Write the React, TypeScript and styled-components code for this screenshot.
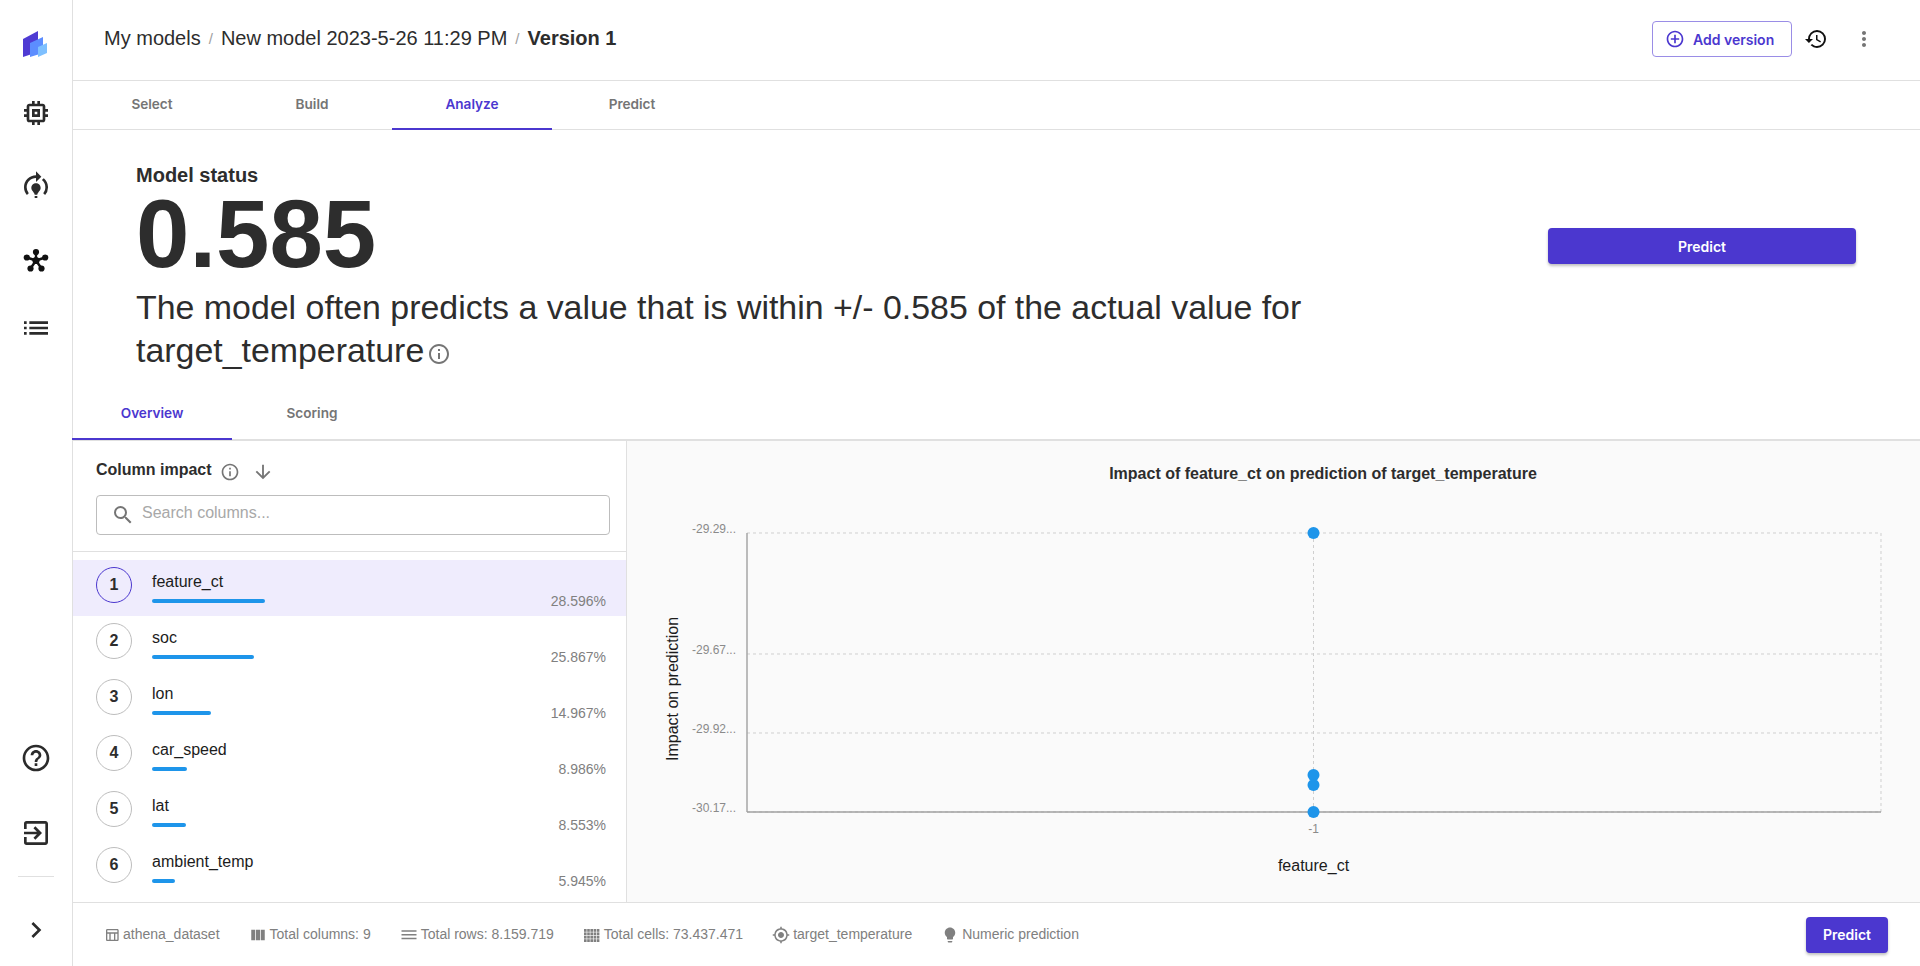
import React from 'react';
import styled, { createGlobalStyle } from 'styled-components';
import {
  MdAddCircleOutline,
  MdArrowDownward,
  MdChevronRight,
  MdDehaze,
  MdExitToApp,
  MdGpsFixed,
  MdHelpOutline,
  MdHistory,
  MdInfoOutline,
  MdLightbulb,
  MdList,
  MdModelTraining,
  MdMoreVert,
  MdOutlineMemory,
  MdOutlineTableChart,
  MdSearch,
  MdViewColumn
} from 'react-icons/md';

const accent = '#4b37cf';
const line = '#e0e0e0';
const grey = '#757575';

const GlobalStyle = createGlobalStyle`
  html, body { margin: 0; padding: 0; height: 100%; overflow: hidden; background: #fff; }
  #root { height: 100%; }
  * { box-sizing: border-box; }
`;

const Page = styled.div`
  display: flex;
  height: 966px;
  font-family: 'Liberation Sans', Arial, sans-serif;
  color: #2d2d2d;
`;

const Sidebar = styled.aside`
  width: 73px;
  flex: none;
  display: flex;
  flex-direction: column;
  align-items: center;
  border-right: 1px solid ${line};
  padding-top: 28px;
`;

const Logo = styled.svg`
  width: 32px;
  height: 32px;
  margin-right: 1px;
`;

const NavItem = styled.div<{ $mt: number }>`
  display: flex;
  width: 32px;
  height: 32px;
  margin-top: ${p => p.$mt}px;
  margin-right: 1px;
  color: #2b2b2b;
`;

const Spacer = styled.div`
  flex: 1;
`;

const SideDivider = styled.hr`
  width: 36px;
  margin: 27px 1px 0 0;
  border: 0;
  border-top: 1px solid ${line};
`;

const SideFoot = styled.div`
  height: 20px;
  flex: none;
`;

const Main = styled.main`
  flex: 1;
  min-width: 0;
  display: flex;
  flex-direction: column;
`;

const Header = styled.header`
  height: 81px;
  flex: none;
  display: flex;
  align-items: center;
  padding: 0 44px 2px 31px;
  border-bottom: 1px solid ${line};
`;

const Crumbs = styled.nav`
  display: flex;
  align-items: center;
  flex: 1;
  font-size: 20px;
  margin-top: -1px;
`;

const Crumb = styled.span<{ $current?: boolean }>`
  font-weight: ${p => (p.$current ? 700 : 400)};
`;

const CrumbSep = styled.span`
  color: #a0a0a0;
  margin: 0 8px;
  font-size: 15px;
`;

const AddVersion = styled.button`
  width: 140px;
  height: 36px;
  display: flex;
  align-items: center;
  gap: 8px;
  padding: 0 12px;
  background: #fff;
  border: 1px solid #9a8de6;
  border-radius: 4px;
  color: ${accent};
  font-family: Inter, sans-serif;
  font-size: 14px;
  font-weight: 600;
  white-space: nowrap;
`;

const HeaderIcon = styled.span<{ $ml: number; $color: string }>`
  display: flex;
  margin-left: ${p => p.$ml}px;
  color: ${p => p.$color};
`;

const TabBar = styled.div`
  display: flex;
  flex: none;
  height: 49px;
  border-bottom: 1px solid ${line};
`;

const SubTabBar = styled(TabBar)`
  height: 48px;
  border-bottom-width: 2px;
`;

const Tab = styled.div<{ $active?: boolean; $lift?: number }>`
  width: 160px;
  display: flex;
  align-items: center;
  justify-content: center;
  padding-bottom: ${p => p.$lift ?? 1}px;
  margin-left: -1px;
  margin-right: 1px;
  font-family: Inter, sans-serif;
  font-size: 13.6px;
  font-weight: 600;
  color: ${p => (p.$active ? accent : grey)};
  border-bottom: 2px solid ${p => (p.$active ? accent : 'transparent')};
  margin-bottom: -1px;
`;

const Status = styled.section`
  flex: none;
  height: 263px;
  display: flex;
  justify-content: space-between;
  padding: 33px 64px 0 63px;
`;

const StatusText = styled.div`
  width: 1210px;
`;

const StatusLabel = styled.div`
  font-size: 20px;
  font-weight: 700;
  line-height: 24px;
`;

const Score = styled.div`
  font-size: 96px;
  font-weight: 700;
  line-height: 92px;
  margin-top: 1px;
`;

const Sentence = styled.div`
  font-size: 33.9px;
  line-height: 43px;
  margin-top: 6px;
`;

const InlineInfo = styled(MdInfoOutline)`
  vertical-align: -4px;
  margin-left: 3px;
  color: ${grey};
`;

const PredictLarge = styled.button`
  width: 308px;
  height: 36px;
  margin-top: 65px;
  border: 0;
  border-radius: 4px;
  background: ${accent};
  color: #fff;
  font-family: Inter, sans-serif;
  font-size: 14px;
  font-weight: 600;
  box-shadow: 0 2px 3px rgba(0, 0, 0, 0.25);
`;

const Body = styled.div`
  flex: 1;
  min-height: 0;
  display: flex;
`;

const ColumnsPanel = styled.section`
  width: 554px;
  flex: none;
  display: flex;
  flex-direction: column;
  border-right: 1px solid ${line};
  overflow: hidden;
`;

const PanelTop = styled.div`
  flex: none;
  height: 111px;
  padding: 17px 16px 0 23px;
  border-bottom: 1px solid ${line};
`;

const PanelTitle = styled.div`
  display: flex;
  align-items: center;
  height: 24px;
  font-size: 16px;
  font-weight: 700;
`;

const TitleIcon = styled.span<{ $ml: number }>`
  display: flex;
  margin: 3px 0 0 ${p => p.$ml}px;
  color: ${grey};
`;

const SearchBox = styled.div`
  display: flex;
  align-items: center;
  height: 40px;
  margin-top: 13px;
  padding-left: 14px;
  gap: 5px;
  border: 1px solid #bdbdbd;
  border-radius: 4px;
  color: ${grey};
`;

const SearchInput = styled.input`
  flex: 1;
  border: 0;
  outline: 0;
  background: none;
  font-family: 'Liberation Sans', Arial, sans-serif;
  font-size: 16px;
  margin-top: -4px;

  &::placeholder {
    color: #a8a8a8;
    opacity: 1;
  }
`;

const List = styled.div`
  padding-top: 8px;
`;

const Row = styled.div<{ $selected?: boolean }>`
  height: 56px;
  display: flex;
  align-items: center;
  padding: 0 20px 0 23px;
  background: ${p => (p.$selected ? '#efecfd' : 'transparent')};
`;

const Rank = styled.div<{ $selected?: boolean }>`
  width: 36px;
  height: 36px;
  flex: none;
  display: flex;
  align-items: center;
  justify-content: center;
  border-radius: 50%;
  border: 1px solid ${p => (p.$selected ? accent : '#bdbdbd')};
  font-size: 16px;
  font-weight: 700;
  margin-bottom: 7px;
`;

const RowInfo = styled.div`
  flex: 1;
  margin-left: 20px;
  margin-top: -1px;
`;

const RowName = styled.div`
  font-size: 16px;
  line-height: 20px;
  color: #1c1c1c;
`;

const Bar = styled.div`
  height: 4px;
  margin-top: 7px;
  border-radius: 2px;
  background: #1e95ea;
`;

const Percent = styled.div`
  align-self: flex-end;
  margin-bottom: 7px;
  font-size: 14px;
  line-height: 16px;
  color: #808080;
`;

const ChartPanel = styled.section`
  flex: 1;
  min-width: 0;
  display: flex;
  flex-direction: column;
  background: #fafafa;
`;

const ChartTitle = styled.h3`
  margin: 0;
  padding: 24px 0 0 99px;
  height: 60px;
  font-size: 16px;
  line-height: 18px;
  font-weight: 700;
  text-align: center;
  color: #2d2d2d;
`;

const ChartSvg = styled.svg`
  display: block;
  flex: 1;
  min-height: 0;
  width: 100%;
`;

const AxisLabel = styled.text`
  font-family: 'Liberation Sans', Arial, sans-serif;
  font-size: 12px;
  fill: #8a8a8a;
`;

const AxisTitle = styled.text`
  font-family: 'Liberation Sans', Arial, sans-serif;
  font-size: 16px;
  fill: #1c1c1c;
  text-anchor: middle;
`;

const Footer = styled.footer`
  flex: none;
  height: 64px;
  display: flex;
  align-items: center;
  padding: 0 32px 0 31px;
  border-top: 1px solid ${line};
`;

const FooterItems = styled.div`
  flex: 1;
  display: flex;
  align-items: center;
  gap: 29px;
`;

const FooterItem = styled.div`
  display: flex;
  align-items: center;
  gap: 3px;
  font-size: 14px;
  color: #808080;
  margin-top: -2px;

  svg {
    flex: none;
    margin-top: 3px;
  }
`;

const PredictSmall = styled.button`
  width: 82px;
  height: 36px;
  border: 0;
  border-radius: 4px;
  background: ${accent};
  color: #fff;
  font-family: Inter, sans-serif;
  font-size: 14px;
  font-weight: 600;
  box-shadow: 0 2px 3px rgba(0, 0, 0, 0.25);
`;

const columns = [
  { name: 'feature_ct', share: 28.596 },
  { name: 'soc', share: 25.867 },
  { name: 'lon', share: 14.967 },
  { name: 'car_speed', share: 8.986 },
  { name: 'lat', share: 8.553 },
  { name: 'ambient_temp', share: 5.945 }
];

// chart coords are relative to the svg, which starts at x=627 y=501
const plot = { left: 120, right: 1254, top: 32, bottom: 311, midX: 686.5 };
const ticks = [
  { label: '-29.29...', y: 32 },
  { label: '-29.67...', y: 153 },
  { label: '-29.92...', y: 232 },
  { label: '-30.17...', y: 311 }
];
const points = [32, 274, 284, 311];

const ImpactChart = () => (
  <ChartSvg viewBox="0 0 1293 401" preserveAspectRatio="xMinYMin meet">
    {ticks.map(t => (
      <g key={t.label}>
        <line x1={plot.left} x2={plot.right} y1={t.y} y2={t.y} stroke="#cfcfcf" strokeDasharray="3 3" />
        <AxisLabel x={109} y={t.y} textAnchor="end">{t.label}</AxisLabel>
      </g>
    ))}
    <line x1={plot.right} x2={plot.right} y1={plot.top} y2={plot.bottom} stroke="#cfcfcf" strokeDasharray="3 3" />
    <line x1={plot.midX} x2={plot.midX} y1={plot.top} y2={plot.bottom} stroke="#cfcfcf" strokeDasharray="3 3" />
    <line x1={plot.left} x2={plot.left} y1={plot.top} y2={plot.bottom} stroke="#a6a6a6" strokeWidth="1.5" />
    <line x1={plot.left} x2={plot.right} y1={plot.bottom} y2={plot.bottom} stroke="#a0a0a0" strokeWidth="1.5" />
    {points.map(y => (
      <circle key={y} cx={plot.midX} cy={y} r="6" fill="#1e95ea" />
    ))}
    <AxisLabel x={plot.midX} y={332} textAnchor="middle">-1</AxisLabel>
    <AxisTitle x={plot.midX} y={370}>feature_ct</AxisTitle>
    <AxisTitle transform="translate(51 188) rotate(-90)">Impact on prediction</AxisTitle>
  </ChartSvg>
);

const HubIcon = () => (
  <svg width="32" height="32" viewBox="0 0 32 32" fill="#111">
    <circle cx="16" cy="7" r="3.1" />
    <circle cx="6.8" cy="12.5" r="3.1" />
    <circle cx="25.2" cy="12.5" r="3.1" />
    <circle cx="10.5" cy="23.5" r="3.1" />
    <circle cx="21.5" cy="23.5" r="3.1" />
    <circle cx="16" cy="15.5" r="3.6" />
    <path d="M16 7v8.5M6.8 12.5l9.2 3M25.2 12.5l-9.2 3M10.5 23.5l5.5-8M21.5 23.5l-5.5-8" stroke="#111" strokeWidth="2.4" />
  </svg>
);

const CellsIcon = () => (
  <svg width="18" height="18" viewBox="0 0 18 18" fill="currentColor">
    {[3, 6.4, 9.8, 13.2].map(y =>
      [1, 4.2, 7.4, 10.6, 13.8].map(x => <rect key={`${x}-${y}`} x={x} y={y} width="2.6" height="2.8" />)
    )}
  </svg>
);

export default function App() {
  return (
    <>
      <GlobalStyle />
      <Page>
        <Sidebar>
          <Logo viewBox="0 0 32 32">
            <polygon points="3,11 18,3 18,24 3,29" fill="#4f3bd3" />
            <polygon points="10,15 23,9 23,25 10,29" fill="#5c8dff" />
            <polygon points="18,19 27,15 27,25 18,29" fill="#7ec0ff" />
          </Logo>
          <NavItem $mt={37}><MdOutlineMemory size={32} /></NavItem>
          <NavItem $mt={41}><MdModelTraining size={32} /></NavItem>
          <NavItem $mt={43}><HubIcon /></NavItem>
          <NavItem $mt={35}><MdList size={32} /></NavItem>
          <Spacer />
          <NavItem $mt={0}><MdHelpOutline size={32} /></NavItem>
          <NavItem $mt={43}><MdExitToApp size={32} /></NavItem>
          <SideDivider />
          <NavItem $mt={37}><MdChevronRight size={32} /></NavItem>
          <SideFoot />
        </Sidebar>
        <Main>
          <Header>
            <Crumbs>
              <Crumb>My models</Crumb>
              <CrumbSep>/</CrumbSep>
              <Crumb>New model 2023-5-26 11:29 PM</Crumb>
              <CrumbSep>/</CrumbSep>
              <Crumb $current>Version 1</Crumb>
            </Crumbs>
            <AddVersion><MdAddCircleOutline size={20} />Add version</AddVersion>
            <HeaderIcon $ml={12} $color="#111"><MdHistory size={24} /></HeaderIcon>
            <HeaderIcon $ml={24} $color={grey}><MdMoreVert size={24} /></HeaderIcon>
          </Header>
          <TabBar>
            <Tab>Select</Tab>
            <Tab>Build</Tab>
            <Tab $active>Analyze</Tab>
            <Tab>Predict</Tab>
          </TabBar>
          <Status>
            <StatusText>
              <StatusLabel>Model status</StatusLabel>
              <Score>0.585</Score>
              <Sentence>
                The model often predicts a value that is within +/- 0.585 of the actual value for target_temperature
                <InlineInfo size={24} />
              </Sentence>
            </StatusText>
            <PredictLarge>Predict</PredictLarge>
          </Status>
          <SubTabBar>
            <Tab $active $lift={5}>Overview</Tab>
            <Tab $lift={5}>Scoring</Tab>
          </SubTabBar>
          <Body>
            <ColumnsPanel>
              <PanelTop>
                <PanelTitle>
                  Column impact
                  <TitleIcon $ml={8}><MdInfoOutline size={20} /></TitleIcon>
                  <TitleIcon $ml={12}><MdArrowDownward size={22} /></TitleIcon>
                </PanelTitle>
                <SearchBox>
                  <MdSearch size={24} />
                  <SearchInput placeholder="Search columns..." />
                </SearchBox>
              </PanelTop>
              <List>
                {columns.map((c, i) => (
                  <Row key={c.name} $selected={i === 0}>
                    <Rank $selected={i === 0}>{i + 1}</Rank>
                    <RowInfo>
                      <RowName>{c.name}</RowName>
                      <Bar style={{ width: c.share * 3.95 }} />
                    </RowInfo>
                    <Percent>{c.share.toFixed(3)}%</Percent>
                  </Row>
                ))}
              </List>
            </ColumnsPanel>
            <ChartPanel>
              <ChartTitle>Impact of feature_ct on prediction of target_temperature</ChartTitle>
              <ImpactChart />
            </ChartPanel>
          </Body>
          <Footer>
            <FooterItems>
              <FooterItem><MdOutlineTableChart size={16} />athena_dataset</FooterItem>
              <FooterItem><MdViewColumn size={18} />Total columns: 9</FooterItem>
              <FooterItem><MdDehaze size={18} />Total rows: 8.159.719</FooterItem>
              <FooterItem><CellsIcon />Total cells: 73.437.471</FooterItem>
              <FooterItem><MdGpsFixed size={18} />target_temperature</FooterItem>
              <FooterItem><MdLightbulb size={18} />Numeric prediction</FooterItem>
            </FooterItems>
            <PredictSmall>Predict</PredictSmall>
          </Footer>
        </Main>
      </Page>
    </>
  );
}
